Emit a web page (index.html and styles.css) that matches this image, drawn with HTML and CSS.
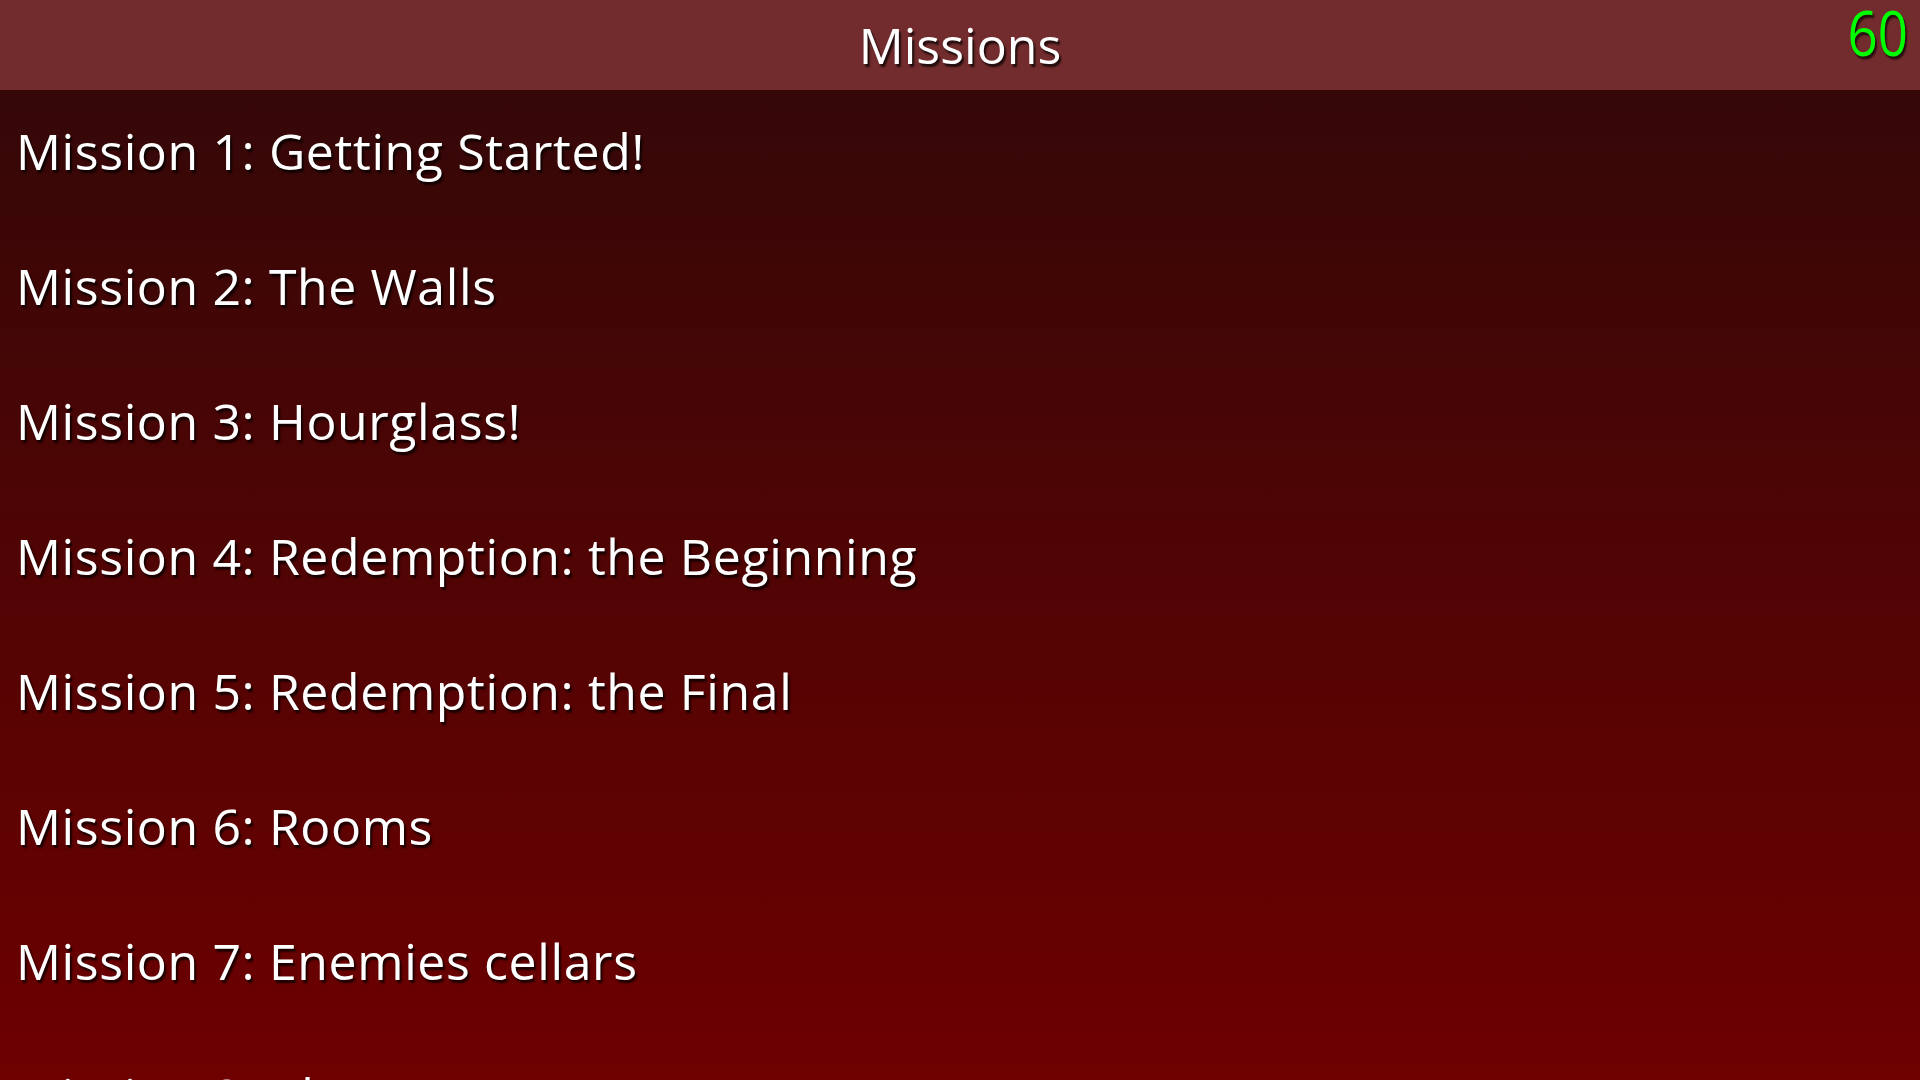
FILE: index.html
```html
<!DOCTYPE html>
<html>
<head>
<meta charset="utf-8">
<link rel="stylesheet" href="styles.css">
</head>
<body>
<div class="screen">
  <header class="topbar">
    <h1 class="title">Missions</h1>
    <div class="fps">60</div>
  </header>
  <ul class="missions">
    <li class="mission">Mission 1: Getting Started!</li>
    <li class="mission">Mission 2: The Walls</li>
    <li class="mission">Mission 3: Hourglass!</li>
    <li class="mission">Mission 4: Redemption: the Beginning</li>
    <li class="mission">Mission 5: Redemption: the Final</li>
    <li class="mission">Mission 6: Rooms</li>
    <li class="mission">Mission 7: Enemies cellars</li>
    <li class="mission">Mission 8: Abyss</li>
  </ul>
</div>
</body>
</html>
```

FILE: styles.css
```css
html, body {
  margin: 0;
  padding: 0;
  width: 1920px;
  height: 1080px;
  overflow: hidden;
}
body {
  font-family: "Open Sans", "Noto Sans", sans-serif;
  color: #ffffff;
}
.screen {
  width: 1920px;
  height: 1080px;
  display: flex;
  flex-direction: column;
  background: linear-gradient(to bottom, #300808 0px, #6e0000 1080px);
  overflow: hidden;
}
.topbar {
  position: relative;
  height: 90px;
  flex: 0 0 90px;
  background: #732c2d;
  display: flex;
  align-items: center;
  justify-content: center;
}
.title {
  margin: 0;
  font-size: 50px;
  font-weight: 400;
  line-height: 1;
  text-shadow: 2px 3px 2px rgba(0, 0, 0, 0.75);
}
.fps {
  position: absolute;
  right: 12px;
  top: 0px;
  font-size: 63px;
  font-weight: 500;
  line-height: 1;
  color: #00ff00;
  transform: scaleX(0.84);
  transform-origin: right top;
  text-shadow: 2px 3px 2px rgba(0, 0, 0, 0.7);
}
.missions {
  list-style: none;
  margin: 0;
  padding: 0;
}
.mission {
  height: 135px;
  box-sizing: border-box;
  padding: 27px 0 0 16px;
  font-size: 50px;
  line-height: 68px;
  letter-spacing: 0.6px;
  white-space: nowrap;
  text-shadow: 2px 3px 2px rgba(0, 0, 0, 0.75);
}
```
